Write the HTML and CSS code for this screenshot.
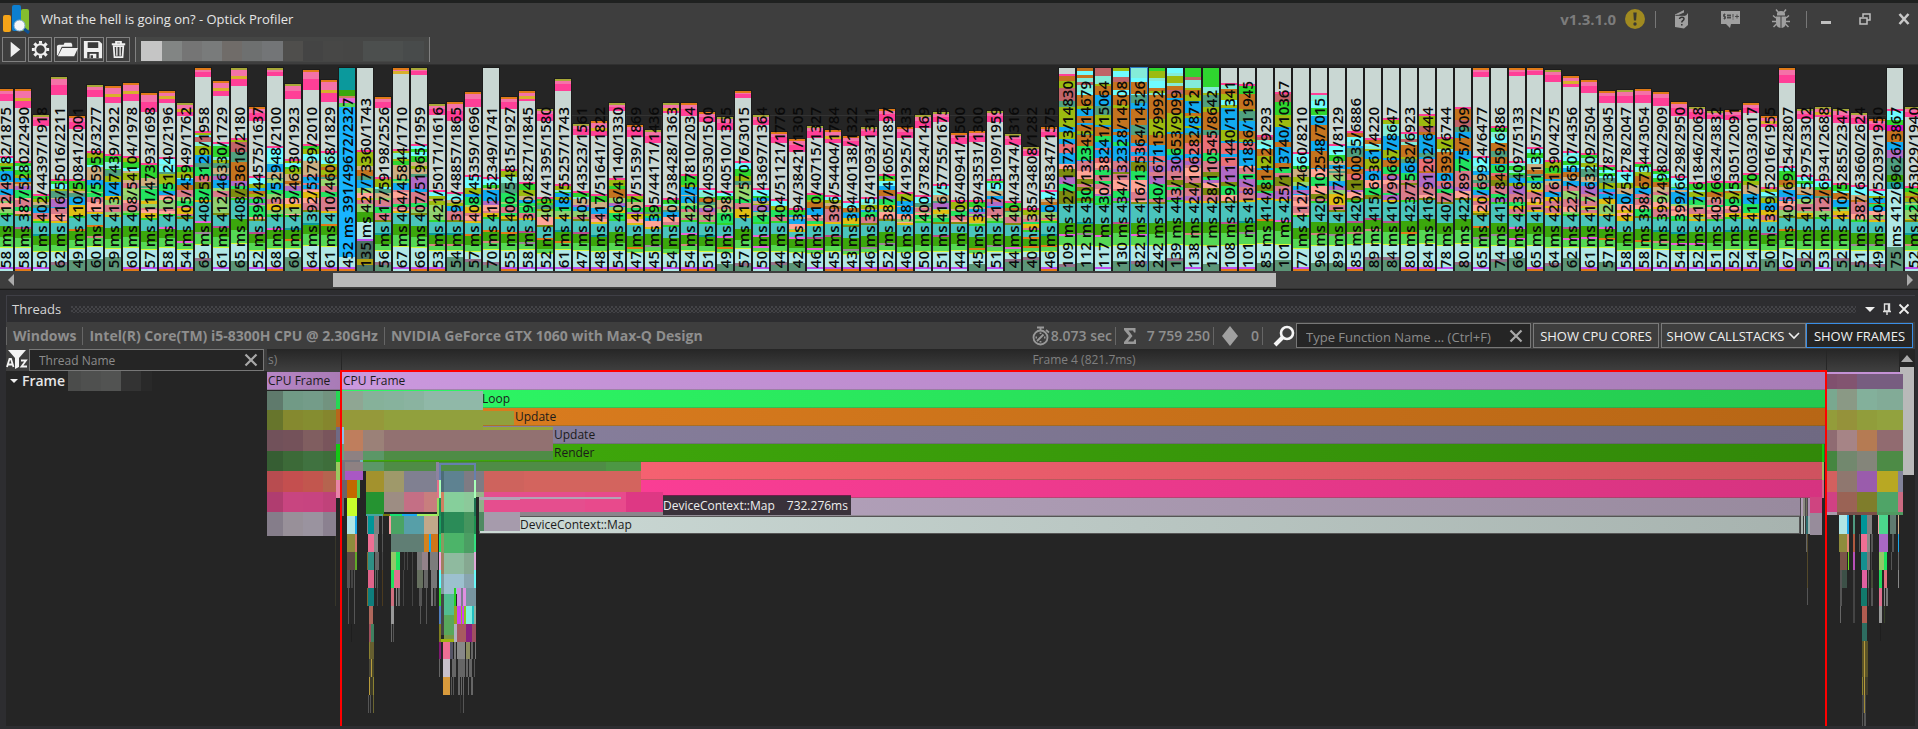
FILE: index.html
```html
<!DOCTYPE html>
<html lang="en">
<head>
<meta charset="utf-8">
<title>What the hell is going on? - Optick Profiler</title>
<link rel="stylesheet" href="styles.css">
</head>
<body>
<header class="titlebar">
  <svg class="logo" viewBox="0 0 28 30" aria-hidden="true">
    <rect x="1" y="11" width="8" height="17" rx="2" fill="#f5a418"/>
    <rect x="10" y="1" width="9" height="26" rx="2" fill="#0c7fd0"/>
    <rect x="19" y="5" width="8" height="22" rx="2" fill="#84bd2e"/>
    <path d="M21 24l6 5" stroke="#0d4f92" stroke-width="3"/>
    <circle cx="17.500" cy="21.500" r="5.500" fill="#f4f6fa" stroke="#7fa9cc"/>
  </svg>
  <h1 class="title">What the hell is going on? - Optick Profiler</h1>
  <span class="version">v1.3.1.0</span>
  <svg class="warn" viewBox="0 0 20 20" aria-hidden="true"><circle cx="10" cy="10" r="10" fill="#a08a20"/><path d="M8.300 3.500h3.400l-.6 8H8.900z" fill="#3a3a30"/><circle cx="10" cy="15" r="1.700" fill="#3a3a30"/></svg>
  <span class="rule rule-a"></span>
  <button class="wbtn" aria-label="Help"><svg viewBox="0 0 20 20" width="20" height="20"><path d="M4 5.500L13 1v2.500L7.500 6H4zM4 6.500h11l2-2.500v12l-4 3.500-9-1.500z" fill="#a0a0a0"/><path d="M5 6.300h9l2.500-3" fill="none" stroke="#3e3e3e" stroke-width=".8"/><path d="M8.500 10c.3-2.500 4.800-2.500 4.500 0-.2 1.800-2.200 1.600-2.200 3.400M10.800 15v1.500" fill="none" stroke="#333" stroke-width="1.500"/></svg></button>
  <button class="wbtn" aria-label="Feedback"><svg viewBox="0 0 20 20" width="20" height="20"><path d="M0 2h19v13h-9l-1 4-4-4H0z" fill="#a0a0a0"/><path d="M4.500 5.500H2.500v2h2v2h-2M3.500 4.500v6M7 5v5M9 5v5M6 6.500h4M6 8.500h4M12 5v3.500M12 9.500v1M14 7.500h4M16 5.500v4" fill="none" stroke="#444" stroke-width=".9"/></svg></button>
  <button class="wbtn" aria-label="Report bug"><svg viewBox="0 0 20 20" width="20" height="20"><path d="M6 5a4 3 0 0 1 8 0v1.500H6zM5 7.500h4.500V19C6 18.500 5 16 5 13zM10.500 7.500H15V13c0 3-1 5.500-4.500 6z" fill="#a0a0a0"/><path d="M7 3L5 .5M13 3l2-2.500M5 9L2 6.500M15 9l3-2.500M5 12.500H1M15 12.500h4M5.500 15L2.500 18M14.500 15l3 3" stroke="#a0a0a0" stroke-width="1.500"/></svg></button>
  <span class="rule rule-b"></span>
  <button class="win" aria-label="Minimize"><svg viewBox="0 0 12 12" width="12" height="12"><path d="M1 8h10v3H1z" fill="#c0c0c0"/></svg></button>
  <button class="win" aria-label="Restore"><svg viewBox="0 0 12 12" width="12" height="12"><path d="M4 4V1h7v6H8M1 5h7v6H1z" fill="none" stroke="#c0c0c0" stroke-width="1.500"/></svg></button>
  <button class="win" aria-label="Close"><svg viewBox="0 0 12 12" width="12" height="12"><path d="M1.500 1l9 10M10.500 1l-9 10" stroke="#c8c8c8" stroke-width="2.600"/></svg></button>
</header>

<nav class="tools">
  <button class="tool" aria-label="Start capture"><svg viewBox="0 0 24 24"><path d="M8 4l10 8-10 8z" fill="#f0f0f0"/></svg></button>
  <button class="tool" aria-label="Settings"><svg viewBox="0 0 24 24"><circle cx="12" cy="12" r="5.500" fill="none" stroke="#f0f0f0" stroke-width="2"/><path d="M12 3v3M12 18v3M3 12h3M18 12h3M5.600 5.600l2.200 2.200M16.200 16.200l2.200 2.200M5.600 18.400l2.200-2.200M16.200 7.800l2.200-2.200" stroke="#f0f0f0" stroke-width="3.200"/></svg></button>
  <button class="tool" aria-label="Open"><svg viewBox="0 0 24 24"><path d="M2 18V8l2-1h5l1-2h7l1 2v2H7l-4 9z" fill="#f0f0f0"/><path d="M7.500 10.500H24L20 19H3z" fill="#f0f0f0"/></svg></button>
  <button class="tool" aria-label="Save"><svg viewBox="0 0 24 24"><path d="M3 3h16l3 3v15H3z" fill="#f0f0f0"/><path d="M7 4.500h11v6H7zM6.500 14.500h12V21h-12z" fill="#3a3a3a"/><path d="M9 16.500h7V21H9z" fill="#f0f0f0"/><path d="M10 18h2.500v3H10z" fill="#3a3a3a"/></svg></button>
  <button class="tool" aria-label="Clear"><svg viewBox="0 0 24 24"><path d="M5 6.500h14M9.500 5.500V4h5v1.500" fill="none" stroke="#f0f0f0" stroke-width="2"/><path d="M7 8.500l.8 11.500h8.400L17 8.500z" fill="none" stroke="#f0f0f0" stroke-width="1.800"/><path d="M10.300 9.500v9M13.700 9.500v9" stroke="#f0f0f0" stroke-width="1.400"/></svg></button>
  <div class="capture"><div class="capture-mask"></div></div>
</nav>

<section class="history" aria-label="Frame history"><div class="bars" id="bars"></div></section>
<div class="hscroll"><i class="arrow left"></i><div class="htrack"><div class="hthumb"></div></div><i class="arrow right"></i></div>

<main class="panel">
  <div class="panel-head">
    <h2 class="panel-title">Threads</h2>
    <div class="grip"></div>
    <button class="mini" aria-label="Options"><svg viewBox="0 0 14 14" width="14" height="14"><path d="M2 5h10L7 10z" fill="#eee"/></svg></button>
    <button class="mini" aria-label="Pin"><svg viewBox="0 0 14 14" width="14" height="14"><path d="M4.500 2h5v7h-5zM8.500 2v7M3 9.500h8M7 9.500V13" fill="none" stroke="#ddd" stroke-width="1.400"/></svg></button>
    <button class="mini" aria-label="Close panel"><svg viewBox="0 0 14 14" width="14" height="14"><path d="M2.500 2.500l9 9M11.500 2.500l-9 9" stroke="#eee" stroke-width="1.800"/></svg></button>
  </div>

  <div class="info">
    <span class="spec">Windows</span>
    <span class="spec">Intel(R) Core(TM) i5-8300H CPU @ 2.30GHz</span>
    <span class="spec">NVIDIA GeForce GTX 1060 with Max-Q Design</span>
    <span class="stat time"><svg viewBox="0 0 20 20" width="20" height="20"><circle cx="9.500" cy="11.500" r="7" fill="none" stroke="#999" stroke-width="1.800"/><path d="M6 1.500h7M9.500 2v3M15 4l3 2.500M9.500 6.500v1.500M4.500 11.500H6M13 11.500h1.500M9.500 15v1.500M9.500 11.500l3-3M6 15l3.500-3.500" stroke="#999" stroke-width="1.800"/></svg>8.073 sec</span>
    <span class="stat events"><svg viewBox="0 0 14 18" width="14" height="18"><path d="M1 1h11.500v4.500H11L10 3.500H5.500L9.500 9l-4.500 5.500h5.500l1-2H13V17H1v-2l5-6-5-6z" fill="#999"/></svg><b>7 759 250</b></span>
    <span class="stat tags"><svg viewBox="0 0 16 20" width="16" height="20"><path d="M8 0l8 10-8 10-8-10z" fill="#a0a0a0"/></svg><b>0</b></span>
    <svg class="magnifier" viewBox="0 0 22 22" width="22" height="22" aria-hidden="true"><circle cx="14" cy="8" r="6" fill="none" stroke="#f4f4f4" stroke-width="2.600"/><path d="M9.500 12.500L2 20" stroke="#f4f4f4" stroke-width="4"/></svg>
    <div class="field search"><input type="text" aria-label="Function name" placeholder="Type Function Name ... (Ctrl+F)"><button class="clear" aria-label="Clear search"><svg viewBox="0 0 14 14" width="14" height="14"><path d="M1.500 1.500l11 11M12.500 1.500l-11 11" stroke="#a8a8a8" stroke-width="2.200"/></svg></button></div>
    <button class="toggle cores">SHOW CPU CORES</button>
    <button class="toggle stacks">SHOW CALLSTACKS<svg viewBox="0 0 12 8" width="12" height="8"><path d="M1 1l5 5 5-5" fill="none" stroke="#eee" stroke-width="1.600"/></svg></button>
    <button class="toggle frames on">SHOW FRAMES</button>
  </div>

  <div class="work">
    <aside class="threads">
      <div class="filter">
        <svg viewBox="0 0 22 20" width="22" height="20" aria-hidden="true"><path d="M2 0h18l-7 8v9l-4 2V8z" fill="#f4f4f4"/><path d="M1 17l2.500-8H5l2.500 8M2 14.500h4.500M15 10.500h5L15.500 16.500H21" fill="none" stroke="#3e3e3e" stroke-width="3.400"/><path d="M1 17l2.500-8H5l2.500 8M2 14.500h4.500M15 10.500h5L15.500 16.500H21" fill="none" stroke="#f4f4f4" stroke-width="1.800"/></svg>
        <div class="field name"><input type="text" aria-label="Thread name" placeholder="Thread Name"><button class="clear" aria-label="Clear filter"><svg viewBox="0 0 14 14" width="14" height="14"><path d="M1.500 1.500l11 11M12.500 1.500l-11 11" stroke="#a8a8a8" stroke-width="2.200"/></svg></button></div>
      </div>
      <div class="thread"><i class="caret"></i>Frame<span class="thread-mask"></span></div>
    </aside>

    <div class="timeline">
      <div class="ruler"><span class="tick prev">s)</span><span class="tick current">Frame 4 (821.7ms)</span><span class="tick next"></span></div>
      <div class="canvas">
        <div class="col prev"><div class="lane frame-lane">CPU Frame</div></div>
        <div class="col current">
          <div class="lane l1">CPU Frame</div>
          <div class="lane l2">Loop</div>
          <div class="lane l3">Update</div>
          <div class="lane l4">Update</div>
          <div class="lane l5">Render</div>
          <div class="lane l6"></div>
          <div class="lane l7"></div>
          <div class="lane l8"></div>
          <div class="lane l9">DeviceContext::Map</div>
          <div class="outline"></div>
        </div>
        <div class="col next"></div>
        <svg class="detail start" id="start" viewBox="21 66 1188 1044" aria-hidden="true"></svg>
        <svg class="detail end" id="end" viewBox="1080 246 315 1071" aria-hidden="true"></svg>
        <div class="tip"><span>DeviceContext::Map</span><span>732.276ms</span></div>
      </div>
    </div>
    <div class="vscroll"><i class="arrow up"></i><div class="vthumb"></div></div>
  </div>
</main>
<script src="app.js"></script>
</body>
</html>
```

FILE: styles.css
```css
* { box-sizing: border-box; }
body {
  margin: 0;
  min-height: 100vh;
  display: flex;
  flex-direction: column;
  overflow: hidden;
  background: #3e3e3e;
  border-top: 3px solid #1f2120;
  color: #e6e6e6;
  font-family: "Open Sans", "Noto Sans", sans-serif;
  font-size: 14px;
  line-height: 18px;
}
button { font: inherit; color: inherit; padding: 0; border: 0; background: none; display: flex; align-items: center; justify-content: center; }
svg { display: block; flex: none; }

/* title bar */
.titlebar { display: flex; align-items: center; height: 32px; padding-left: 2px; }
.logo { width: 28px; height: 30px; }
.title { margin: 0 auto 0 11px; font-size: 13px; font-weight: 400; }
.version { color: #7c7c7c; font-size: 15px; font-weight: 700; }
.warn { width: 20px; height: 20px; margin-left: 9px; }
.rule { width: 1px; height: 17px; background: #777; }
.rule-a { margin-left: 10px; }
.rule-b { margin-right: 5px; }
.wbtn { width: 50px; height: 30px; }
.win { width: 28px; height: 30px; }
.win + .win { margin-left: 11px; }

/* toolbar */
.tools { display: flex; gap: 2px; padding: 2px 0 2px 2px; height: 29px; }
.tool { width: 24px; height: 25px; border: 1px solid #808080; }
.tool svg { width: 23px; height: 23px; }
.capture { width: 295px; margin-left: 3px; border: 1px solid #808080; border-top: 0; border-bottom: 0; padding: 4px 5px 0 5px; background: #454645; }
.capture-mask {
  height: 20px;
  background: linear-gradient(90deg, #c5c5c5 0 21px, #828584 21px 41px, #757575 41px 61px, #797b7b 61px 81px, #706c69 81px 101px, #6e7070 101px 121px, #737577 121px 142px, #4f4e4c 142px 162px, #444 162px 182px, #474746 182px 202px, #464645 202px 222px, #4c4f4e 222px 262px, #484b4b 262px 283px, #434343 283px);
}

/* frame history */
.history {
  height: 207px;
  padding-top: 3px;
  overflow: hidden;
  border-top: 1px solid #303030;
  background: linear-gradient(#333, #333) 0 50px / 100% 1px no-repeat, linear-gradient(#333, #333) 0 103px / 100% 1px no-repeat, #252525;
}
.bars { display: flex; align-items: flex-end; height: 203px; gap: 2px; margin-left: -3px; }
.bar {
  position: relative;
  flex: none;
  width: 16px;
  height: var(--h);
  background: var(--bands);
  box-shadow: 0 0 0 1px #1c1c1c;
}
.bar.selected { outline: 1px solid #2a78c0; box-shadow: none; }
.bar span {
  position: absolute;
  left: -1px;
  bottom: 3px;
  width: 18px;
  line-height: 18px;
  writing-mode: vertical-rl;
  transform: rotate(180deg);
  white-space: nowrap;
  color: #0a0a0a;
  font-size: 15px;
  font-weight: 600;
}
.arrow { width: 0; height: 0; border: 6px solid transparent; flex: none; }
.arrow.left { border-right-color: #aaa; border-left: 0; }
.arrow.right { border-left-color: #aaa; border-right: 0; }
.arrow.up { border-bottom-color: #aaa; border-top: 0; border-bottom-width: 7px; }
.hscroll { display: flex; align-items: center; height: 18px; padding: 0 5px 0 8px; gap: 3px; border-bottom: 1px solid #333; }
.htrack { flex: 1; padding-left: 16.6%; }
.hthumb { width: 60%; height: 14px; background: #b9b9b9; }

/* threads panel */
.panel { flex: 1; display: flex; flex-direction: column; padding: 5px 3px 3px 6px; background: #2d2d30; border-top: 1px solid #1c1c1c; }
.panel-head { display: flex; align-items: center; height: 27px; padding: 0 4px 0 5px; border-top: 1px solid #3f3f46; border-left: 1px solid #3f3f46; gap: 3px; }
.panel-title { margin: 0 7px 0 0; font-size: 13px; font-weight: 400; color: #d6d6d6; }
.grip { flex: 1; height: 7px; background: radial-gradient(circle at 1px 1px, #434347 1px, transparent 1px) 0 0 / 4px 4px, radial-gradient(circle at 1px 1px, #434347 1px, transparent 1px) 2px 2px / 4px 4px; }
.grip + .mini { margin-left: 4px; }
.mini { width: 14px; height: 14px; }

.info { display: flex; align-items: center; height: 27px; padding-right: 2px; background: #3e3e3e; color: #8e8e8e; font-weight: 700; white-space: nowrap; }
.spec { padding: 0 6px; border-left: 1px solid #666; }
.stat { display: flex; align-items: center; border-right: 1px solid #666; padding-right: 3px; height: 18px; font-weight: 600; }
.stat b { font-weight: 600; flex: 1; text-align: right; }
.time { margin-left: auto; }
.events { width: 98px; padding-left: 7px; }
.tags { width: 49px; padding-left: 8px; }
.magnifier { margin: 0 1px 0 10px; }
.field { display: flex; align-items: center; border: 1px solid #777; background: #252525; }
.field input { flex: 1; min-width: 0; border: 0; outline: 0; background: none; color: #ddd; font: inherit; font-weight: 400; padding: 2px 0 0 9px; }
.field input::placeholder { color: #8c8c8c; opacity: 1; }
.clear { width: 24px; height: 20px; }
.search { width: 235px; height: 25px; font-size: 13px; }
.search .clear { width: 28px; }
.toggle { height: 25px; margin-left: 2px; border: 1px solid #7a7a7a; color: #f0f0f0; font-size: 13px; font-weight: 400; }
.cores { width: 126px; }
.stacks { width: 145px; gap: 4px; }
.frames { width: 107px; margin-left: 0; }
.toggle.on { border-color: #3a8ee6; background: #252525; }

.work { flex: 1; display: flex; background: #252525; }
.threads { width: 261px; flex: none; }
.filter { display: flex; align-items: center; height: 22px; padding-right: 3px; gap: 1px; background: #3e3e3e; }
.name { flex: 1; height: 22px; font-size: 12px; }
.thread { display: flex; align-items: center; height: 20px; padding-left: 4px; font-weight: 600; }
.caret { border: 4px solid transparent; border-top-color: #f0f0f0; border-bottom: 0; margin-right: 4px; }
.thread-mask { width: 84px; height: 20px; margin-left: 3px; background: linear-gradient(90deg, #4b4c4b 0 13px, #4f504f 13px 33px, #525352 33px 53px, #333 53px 73px, #292929 73px); }

.timeline { flex: 1; min-width: 0; display: flex; flex-direction: column; font-size: 12px; }
.ruler, .canvas { display: grid; grid-template-columns: 74px 1fr 73px; }
.ruler { height: 23px; align-items: stretch; background: linear-gradient(#262626, #404040); color: #808080; line-height: 22px; }
.tick { border-left: 1px solid #262626; }
.tick.prev { border: 0; padding-left: 1px; }
.tick.current { text-align: center; }
.canvas { position: relative; flex: 1; color: #1b1b1b; }
.col { min-width: 0; }
.lane { height: 18px; line-height: 17px; white-space: nowrap; overflow: hidden; border-bottom: 1px solid rgba(70, 90, 60, .3); }
.frame-lane { padding-left: 1px; background: linear-gradient(90deg, #b685c6, #a87bb6); }
.col.current { position: relative; }
.l1 { padding-left: 2px; background: linear-gradient(90deg, #cb98de, #a77cb6); }
.l2 { padding-left: 141px; background: linear-gradient(90deg, #2df865, #24c94f); }
.l3 { padding-left: 174px; background: linear-gradient(90deg, #dd7e1f, #b76615); }
.l4 { padding-left: 213px; background: linear-gradient(90deg, #8a819f, #6f6982); }
.l5 { padding-left: 213px; background: linear-gradient(90deg, #40ab0b, #328809); }
.l6 { margin: 0 4px 0 138px; background: linear-gradient(90deg, #fa6373, #cf525f); }
.l7 { margin: 0 4px 0 138px; background: linear-gradient(90deg, #ff3f97, #d63380); }
.l8 { margin: 0 26px 0 138px; background: linear-gradient(90deg, #b9a6c1, #988a9e); }
.l9 { margin: 0 26px 0 138px; padding-left: 40px; line-height: 16px; background: linear-gradient(90deg, #cbd9d5, #a7b3af); border: 1px solid #555; }
.outline { position: absolute; inset: -2px -1px 0; border: 2px solid #f00; border-bottom: 0; z-index: 2; }
.detail { position: absolute; top: 0; shape-rendering: crispEdges; z-index: 1; }
.detail.start { left: 0; width: 396px; height: 348px; }
.detail.end { right: -4px; width: 105px; height: 357px; }
.tip { position: absolute; left: 396px; top: 123px; z-index: 2; display: flex; gap: 12px; height: 20px; padding: 0 3px 0 0; background: #3a323b; border-top: 1px solid #6e1f4a; color: #eee; line-height: 20px; }

.vscroll { width: 16px; display: flex; flex-direction: column; align-items: center; padding-top: 6px; gap: 5px; }
.vthumb { width: 14px; height: 29%; background: #b9b9b9; }
```

FILE: app.js
```js
/* label | top of bar | end of pink cap | start of call bands  (y inside the window) */
const frames = `58 ms 412/49182/1875|89|101|156
58 ms 387/52802/2490|89|108|161
50 ms 402/44397/1918|115|126|194
62 ms 416/55016/2211|77|95|179
49 ms 410/50841/2001|116|129|179
60 ms 415/55958/3277|85|97|151
59 ms 413/47439/1922|86|103|154
60 ms 408/54104/1978|83|101|156
57 ms 411/47393/1698|93|112|163
58 ms 410/51240/2196|91|103|157
54 ms 405/45949/1762|103|116|165
69 ms 408/53129/1958|68|77|131
61 ms 412/46330/1729|81|96|142
65 ms 408/53616/2180|68|86|138
52 ms 399/44575/1637|107|121|176
68 ms 403/52948/2100|68|76|146
60 ms 419/46930/1923|84|99|159
64 ms 392/52799/2010|70|90|144
61 ms 410/46068/1829|80|102|151
452 ms 391/49672/2327|68|68|68
135 ms 427/73360/1743|68|68|150
56 ms 417/59198/2526|97|108|177
67 ms 404/45844/1710|68|74|149
66 ms 407/51965/1959|68|75|144
53 ms 421/50171/1616|104|115|190
54 ms 390/48857/1865|102|121|192
57 ms 408/45359/1696|92|107|175
70 ms 412/52349/1741|68|68|177
55 ms 400/54815/1927|97|109|169
58 ms 390/48271/1845|91|101|182
52 ms 409/41395/1580|109|121|197
61 ms 418/55257/1743|79|91|184
47 ms 405/43523/1561|124|135|191
48 ms 417/51641/1822|121|136|194
54 ms 406/41140/1330|103|111|178
47 ms 407/51539/1869|125|137|194
45 ms 395/44171/1436|130|143|205
54 ms 402/38428/1363|103|113|198
54 ms 422/57810/2034|103|116|174
51 ms 400/40530/1500|112|122|188
49 ms 398/40510/1355|117|130|191
57 ms 417/57076/3015|91|98|161
50 ms 406/43697/1364|115|125|188
44 ms 404/51121/1776|132|143|199
42 ms 394/38421/1305|139|152|208
46 ms 410/40715/1327|126|138|193
45 ms 396/54404/1784|130|143|195
43 ms 394/40138/1322|136|146|201
46 ms 395/41093/1311|127|136|197
52 ms 387/47605/1897|109|121|174
46 ms 387/41925/1433|127|138|192
50 ms 400/37824/1469|115|128|195
51 ms 416/57755/1675|112|122|184
44 ms 406/40941/1500|133|144|200
45 ms 399/43531/1300|131|142|200
51 ms 417/53109/1959|111|122|179
44 ms 404/43474/1316|134|145|201
40 ms 385/34808/1282|147|156|208
46 ms 404/58347/1575|127|137|190
109 ms 427/137273/14830|68|68|74
112 ms 430/132345/14679|68|68|68
117 ms 430/138241/15064|68|68|68
130 ms 434/132328/14508|68|68|68
822 ms 416/135364/14526|68|68|68
242 ms 440/167115/9992|68|68|68
139 ms 443/130653/9099|68|68|68
138 ms 424/106282/8712|68|68|68
121 ms 428/110545/8642|68|68|68
108 ms 429/111440/11341|68|68|83
101 ms 418/121886/11945|68|68|84
85 ms 414/81422/9293|68|68|135
101 ms 425/113740/10367|68|68|92
77 ms 412/74660/8210|68|68|152
96 ms 420/102548/7015|68|68|93
89 ms 419/74491/8129|68|68|144
85 ms 420/100035/6886|68|68|131
89 ms 415/69361/4220|68|68|138
84 ms 410/90667/8647|68|68|118
80 ms 423/75682/6923|68|68|132
84 ms 416/91202/6444|68|68|114
78 ms 407/69393/6744|68|68|137
80 ms 422/89775/7909|68|68|107
65 ms 420/69924/6477|68|77|156
74 ms 413/84659/6886|68|68|126
66 ms 423/64097/5133|68|76|161
65 ms 415/81135/5772|68|75|147
64 ms 422/61390/4275|70|82|160
62 ms 422/76507/4356|76|87|151
61 ms 417/63209/2504|80|93|153
57 ms 424/73787/3045|91|103|165
58 ms 420/54278/2047|90|103|170
58 ms 398/67344/3054|89|103|162
57 ms 399/49802/2909|92|106|169
54 ms 399/66298/2950|102|116|176
52 ms 417/61846/2068|107|119|182
51 ms 403/66324/3832|111|119|181
52 ms 409/53051/2091|110|120|181
54 ms 414/70003/3017|103|113|173
50 ms 389/52016/1955|116|127|187
67 ms 405/69254/2807|68|83|166
52 ms 410/52975/3302|109|119|175
53 ms 412/69341/2688|107|117|179
52 ms 410/52855/2347|109|123|183
51 ms 387/63660/2624|113|124|185
49 ms 404/52039/1950|119|130|189
75 ms 412/69626/3867|68|68|109
52 ms 422/53029/1940|107|117|186`.split('\n').map(line => {
  const [label, ...n] = line.split('|');
  const [top, cap, calls] = n.map(Number);
  return { label, top, cap, calls };
});

const BOTTOM = 271;
let seed = 7;
const rnd = () => (seed = (seed * 16807) % 2147483647) / 2147483647;
const pick = list => list[Math.floor(rnd() * list.length)];

const light = [
  [.24, ['#6ffcff', '#6ffcff', '#2fd62f', '#9cbb10', '#2fd62f', '#84ecd8'], 5],
  [.22, ['#9cbb10', '#cdb083', '#c4741f', '#12aaf0', '#50a080', '#cdb083'], 5],
  [.22, ['#12aaf0', '#12aaf0', '#b06ac6', '#22e360', '#d87c8c', '#98d870'], 7],
  [.32, ['#d87c8c', '#22e360', '#d87c8c', '#ffa597', '#90d070', '#e0be12'], 5]
];
const heavy = [
  [.20, ['#6ffcff', '#9cbb10', '#2fd62f', '#c06468', '#84ecd8', '#c4741f'], 7],
  [.30, ['#c4741f', '#c4741f', '#12aaf0', '#9cbb10', '#12aaf0', '#50a080'], 11],
  [.20, ['#12aaf0', '#12aaf0', '#c4741f', '#e87078', '#22e360'], 10],
  [.30, ['#d87c8c', '#d87c8c', '#22e360', '#b06ac6', '#7c8c10', '#ffa597'], 8]
];

function bandsFor(f, i) {
  const out = [];
  let y = f.top;
  const put = (color, h) => { out.push([color, y - f.top, y + h - f.top]); y += h; };
  const to = (color, end) => { if (end > y) put(color, end - y); };

  if (i === 19) {
    to('#0b999c', 90); to('#3ba70c', 96); to('#d08060', 98); to('#e864d8', 103); to('#55d855', 107);
    to('#18b4ff', 257); to('#b0e8e6', 267); to('#c050f0', 269); to('#e07a18', 271);
    return out;
  }
  if (i === 105) {
    to('#c9d7d3', 109); to('#ff3f97', 111); to('#6ffcff', 120); to('#2fd62f', 125); to('#e010c0', 131);
    to('#c4741f', 142); to('#12aaf0', 150); to('#b06ac6', 158); to('#50a080', 175); to('#3ba70c', 182);
    to('#22a8a8', 189); to('#b0e8e6', 247); to('#5c9678', 271);
    return out;
  }
  if (f.cap > f.top) {
    to(pick(['#e07a18', '#e07a18', '#a8a838']), f.top + 2);
    to('#f472a8', f.top + Math.round((f.cap - f.top) * .45));
    if (rnd() < .2) put('#d8b02c', 3);
    to('#ff3f97', f.cap);
  }
  to('#c9d7d3', f.calls);
  if (f.calls > 68) put('#ff3f97', 2);
  const isHeavy = f.calls < 140;
  const shift = Math.round((isHeavy ? -8 : (f.calls - 165) / 5) + rnd() * 6 - 3);
  const tail = isHeavy ? 208 + shift : Math.max(216 + shift, f.calls + 22);
  const start = y;
  let share = 0;
  for (const [part, colors, size] of isHeavy ? heavy : light) {
    share += part;
    const end = Math.round(start + (tail - start) * share);
    while (y < end) to(pick(colors), Math.min(end, y + 2 + Math.floor(rnd() * size)));
  }
  if (i === 20) {
    to('#3ba70c', 222); to('#b0e8e6', 239); to('#c050f0', 241); to('#4c7464', 259); to('#b0a010', 265); to('#4c7464', 271);
    return out;
  }
  to(pick(['#e0be12', '#2fd62f', '#7c8c10']), y + 2);
  to('#4ac4bc', Math.max(y + 5, 229 + shift));
  if (rnd() < .5) put(pick(['#e864d8', '#0b999c', '#e07a18', '#b8508c']), 2);
  to('#3ba70c', Math.max(y + 3, 240 + shift));
  if (rnd() < .5) put(pick(['#e864d8', '#9a8a98', '#d08880', '#e07a18']), 2);
  to('#55d855', Math.max(y + 3, 248 + Math.round(shift / 2)));
  to('#d4f83c', y + 1);
  to('#b0e8e6', Math.max(y + 3, 257 + Math.floor(rnd() * 8)));
  if (isHeavy && rnd() < .7 || rnd() < .3) {
    if (rnd() < .3) put('#92728a', 3);
    to('#5c9678', 271);
  } else {
    to('#b0e8e6', 267);
    to('#c050f0', 269);
    to(pick(['#e07a18', '#e07a18', '#b0e8e6']), 271);
  }
  return out;
}

const bars = document.getElementById('bars');
frames.forEach((f, i) => {
  const bar = document.createElement('div');
  bar.className = i === 63 ? 'bar selected' : 'bar';
  bar.style.setProperty('--h', BOTTOM - f.top + 'px');
  bar.style.setProperty('--bands', 'linear-gradient(' + bandsFor(f, i).map(([c, a, b]) => `${c} ${a}px ${b}px`).join(',') + ')');
  const text = document.createElement('span');
  text.textContent = f.label;
  bar.append(text);
  bars.append(bar);
});

/* rows of spans: y0 y1 : x0-x1 colour, ... */
const startRows = `
122 176:228-240 25d854,245-310 8fa693,310-371 86b19a,371-431 87b29d,431-492 8ab3a0,492-668 90b8a8
176 230:228-240 b8671b
230 282:228-240 6f6a85
282 336:228-240 14c814,245-251 6fa080
336 390:228-240 9bc95f
390 444:228-240 e884a8
444 557:228-245 252525
122 180:22-69 5f7a6c,69-128 719a86,128-189 749c89,189-228 72937f,245-310 8fa693,310-371 86b19a,371-431 87b29d,431-492 8ab3a0,492-668 90b8a8
180 240:22-69 67752c,69-128 85892f,128-189 858d30,189-228 85862d,245-371 95993a,371-668 91a03d
184 225:668-762 91a03d
231 240:668-878 94a53b
240 303:22-69 71515a,69-128 74525a,128-189 805e60,189-228 79555c,251-310 bf7e5d,310-371 9b8178,371-878 927171
232 282:245-251 8cc0e8
303 330:251-310 8e8182,310-371 5b9767,371-878 4f8c46
303 364:22-69 365e33,69-128 3c6a38,128-189 407240,189-228 3e6e3b
330 336:245-300 777780,300-310 6cb8b8
336 364:245-255 777780,255-310 8e8182,310-371 5b9767,371-1037 4f8c46,1037-1143 4d9744
364 390:245-255 777780,255-310 a958c4
364 426:22-69 b84c50,69-128 c44f4f,128-189 c2564e,189-228 b5644f,318-371 a3922d,371-431 9f996a,431-538 808091,673-792 ce635d,792-1143 d3645e
426 487:22-69 b03d70,69-128 c84580,128-189 c74480,189-228 c0427a,371-431 9d8d83,431-492 c46f85,492-530 c87e7e,673-975 e54e8e,975-1097 e84a8c
426 492:318-371 259331
426 486:1097-1209 de3884
487 498:673-1209 8c858c
487 557:22-69 857d8a,69-128 989099,128-189 9a939f,189-228 8b8190
390 444:245-262 6c6268,262-291 c26800,291-300 54c850
444 498:245-252 6a6a6a,262-291 c8ff2b
492 498:318-370 45a5a0,370-390 76760f,390-425 17e071,425-470 1ba7f0,470-535 9ff060
498 552:262-285 b0e5e4,285-291 1aa7ea,320-323 888888,323-341 009598,341-356 7d8080,366-369 666666,387-393 f4a0a0,393-431 4aa364,431-492 579fa8,492-535 c2a88a
552 605:262-285 8e8c3c,285-291 d07868,323-341 ee6f94,343-353 8a8a8a,366-369 555555,393-492 607e74,492-508 d2821e,508-514 18a6ea,514-535 d0751a
605 660:262-285 5e4a44,285-291 62a828,321-325 806830,325-341 2f8f84,345-350 666666,352-356 666666,366-369 444444,393-407 92c868,407-420 1fe35f,431-434 444444,440-443 444444,456-459 444444,471-485 777777,485-504 93828a,510-535 7c7c7c
660 713:262-270 555555,272-278 444444,282-286 555555,323-341 e0648a,345-348 666666,352-354 555555,366-369 4a3a20,393-403 20e05c,403-420 e07090,430-433 444444,456-459 444444,471-490 66705f,492-504 666666,512-530 777777
713 767:264-267 555555,283-286 555555,321-325 806830,325-341 0e7d7c,350-353 444444,366-369 4a3a20,393-403 d07080,407-411 888888,413-420 666666,430-433 444444,456-459 444444,477-485 555555,497-501 555555,513-518 777777,522-528 555555
767 821:264-267 555555,283-286 555555,327-340 b0685c,393-401 999999,481-484 555555,499-502 555555
821 875:274-276 1e1e1e,327-332 a0505c,332-341 3f8060,393-396 666666,399-403 555555
875 928:327-330 8c8230,330-341 665f30
928 980:327-333 4a4838,333-336 b89c3c,336-341 4a4828
980 1035:327-330 b89c3c,330-338 3c3a28,338-341 8c8230
1035 1089:325-327 555555,331-334 555555,339-342 6b6530
557 767:226-229 38362a
336 390:528-538 8d83a0
338 344:538-648 6680ad
338 390:538-543 6680ad,643-648 6680ad
364 426:544-552 4b6d78,552-612 5e8291,612-643 7f7b83,648-673 7f7b83
390 444:530-537 e4708b,537-543 a8ffb8,643-648 a8ffb8
426 442:648-673 95b58a
426 487:543-552 d08060,552-612 86cf9b,612-643 8cc99a
442 487:656-673 90b08a
444 498:530-537 94db60,537-543 1c9055,643-648 1c7050
487 543:656-673 4f8a62,673-780 a69bac
487 548:543-552 1c6e4a,552-612 2b8c58,612-643 45955e
548 609:543-552 8a9a60,552-612 4cb469,612-643 4b9e63
609 671:543-552 a08060,552-612 8fba9f,612-643 86a891
671 717:612-643 88a5b0
671 732:543-552 809aa0,552-612 9cc0cf
732 795:543-552 454545,552-582 52bd90
795 856:543-552 454545,552-582 58a85c
856 868:552-582 789848
868 875:543-582 9db010
498 552:537-543 1aa060,642-648 1c9050
552 605:537-543 18e070,642-648 35e080
605 660:537-543 f0a8e0,642-648 e0a8d8
660 713:537-543 60ffff,642-648 6af8f8
713 767:537-543 30d030,582-588 25d025,590-602 d090e0,602-610 7d7d90,610-617 e090e0,617-648 7895a0
767 821:537-543 5080c0,582-590 98a020,590-602 d040f0,602-606 90c020,606-612 d040f0,612-617 90c020,617-636 80eee0,636-642 20c0c0,642-648 90b0a0
821 875:537-543 808020,582-590 b0b0c0,590-617 a85a60,617-636 882080,636-648 a05060
875 928:537-543 801870,549-570 ee6f94,570-580 555566,582-588 777777,592-614 888888,617-630 8c8c60,632-638 666666,644-647 777777
928 980:537-540 666666,549-570 c8c0ca,575-588 666666,594-602 666666,604-614 666666,619-623 666666,627-637 666666,643-646 555555
980 1035:549-570 d89a3c,573-576 555555,579-582 555555,594-599 666666,602-605 666666,608-613 666666,623-626 666666,634-638 666666
1035 1089:601-603 333333,609-612 555555
442 447:656-1082 b3a3b6
447 450:656-780 b3a3b6`;

const endRows = `
462 516:1152-1158 12c812,1158-1162 2c6b2c
516 570:1152-1158 98c060,1158-1164 252525
570 624:1152-1158 c87088,1158-1164 252525
624 678:1086-1116 4c484c,1088-1094 b09fb5,1096-1100 8a8a80,1103-1107 6d7060,1111-1116 b090b0
678 731:1086-1116 3a3a3a,1089-1094 a7b3af,1098-1102 b7c3bf,1104-1109 2f6f70,1111-1116 9fb0b0
622 668:1116-1152 cf4480
668 735:1116-1152 978c9b
731 785:1104-1107 666666
731 893:1107-1110 54492a
893 945:1107-1110 555555
246 252:1168-1386 c492d6
252 297:1168-1197 80506e,1197-1257 825470,1257-1395 775d80
297 359:1168-1197 79a88f,1197-1257 8a9985,1257-1317 83b09b,1317-1395 82ab97
359 421:1168-1197 939c3a,1197-1257 95923a,1257-1317 919d3b,1317-1395 92a23e
421 483:1168-1197 8f6b72,1197-1257 a68486,1257-1317 b57b53,1317-1395 916b70
483 544:1168-1197 458640,1197-1257 72886e,1257-1317 84857a,1317-1395 4d8b46
544 605:1168-1197 d2605f,1197-1257 8f776f,1257-1317 9a5cac,1317-1380 b8a823,1380-1395 82839a
605 667:1168-1197 d04183,1197-1257 9a6355,1257-1317 7f7d2b,1317-1380 4fa467,1380-1395 cc6b82
667 676:1168-1197 a89bab,1197-1257 77514c,1257-1317 7c5048,1317-1395 4f9a60
676 731:1203-1227 b0e5e4,1227-1233 1aa7ea,1245-1251 4f9a80,1269-1287 009598,1287-1303 808080,1320-1324 f4a0a0,1324-1350 4bd68c,1356-1374 5f7a70,1380-1384 d0b090
731 785:1203-1227 8e8c3c,1227-1233 e08878,1245-1251 b05a40,1264-1267 555555,1269-1287 ee6f94,1288-1296 8a8a8a,1300-1304 555555,1324-1350 a868c4,1361-1367 555555,1380-1384 1aa7ea
785 839:1206-1227 7a5448,1229-1233 6fd820,1245-1251 b850b8,1269-1287 148f8f,1288-1296 777777,1300-1303 444444,1324-1337 92c868,1337-1348 1fe35f,1359-1362 555555,1380-1384 666666
839 893:1206-1212 555555,1212-1227 3c5047,1246-1250 444444,1272-1287 e060a0,1290-1294 666666,1300-1304 444c38,1324-1333 20d85c,1337-1348 e07080,1380-1383 888888
893 947:1206-1211 555555,1246-1250 444444,1270-1287 127a6c,1290-1293 444444,1300-1304 555555,1324-1333 e07090,1337-1341 888888,1343-1349 777777
947 1000:1206-1209 666666,1246-1250 444444,1272-1287 b05c50,1324-1331 999999,1338-1341 354028
1000 1054:1273-1288 2d6c60,1327-1330 1e1e1e
1054 1160:1272-1289 5b5428,1278-1281 b59a3c
1160 1214:1272-1275 8c8230,1275-1289 403d2a,1278-1281 b59a3c
1214 1268:1273-1284 444444,1278-1281 a08c38
1268 1307:1273-1276 555555,1279-1284 555555`;

function paint(id, rows) {
  const svg = document.getElementById(id);
  for (const row of rows.trim().split('\n')) {
    const [ys, spans] = row.split(':');
    const [y0, y1] = ys.split(' ').map(Number);
    for (const span of spans.split(',')) {
      const [xs, color] = span.split(' ');
      const [x0, x1] = xs.split('-').map(Number);
      const rect = document.createElementNS('http://www.w3.org/2000/svg', 'rect');
      rect.setAttribute('x', x0);
      rect.setAttribute('y', y0);
      rect.setAttribute('width', x1 - x0);
      rect.setAttribute('height', y1 - y0);
      rect.setAttribute('fill', '#' + color);
      svg.append(rect);
    }
  }
}
paint('start', startRows);
paint('end', endRows);
```
